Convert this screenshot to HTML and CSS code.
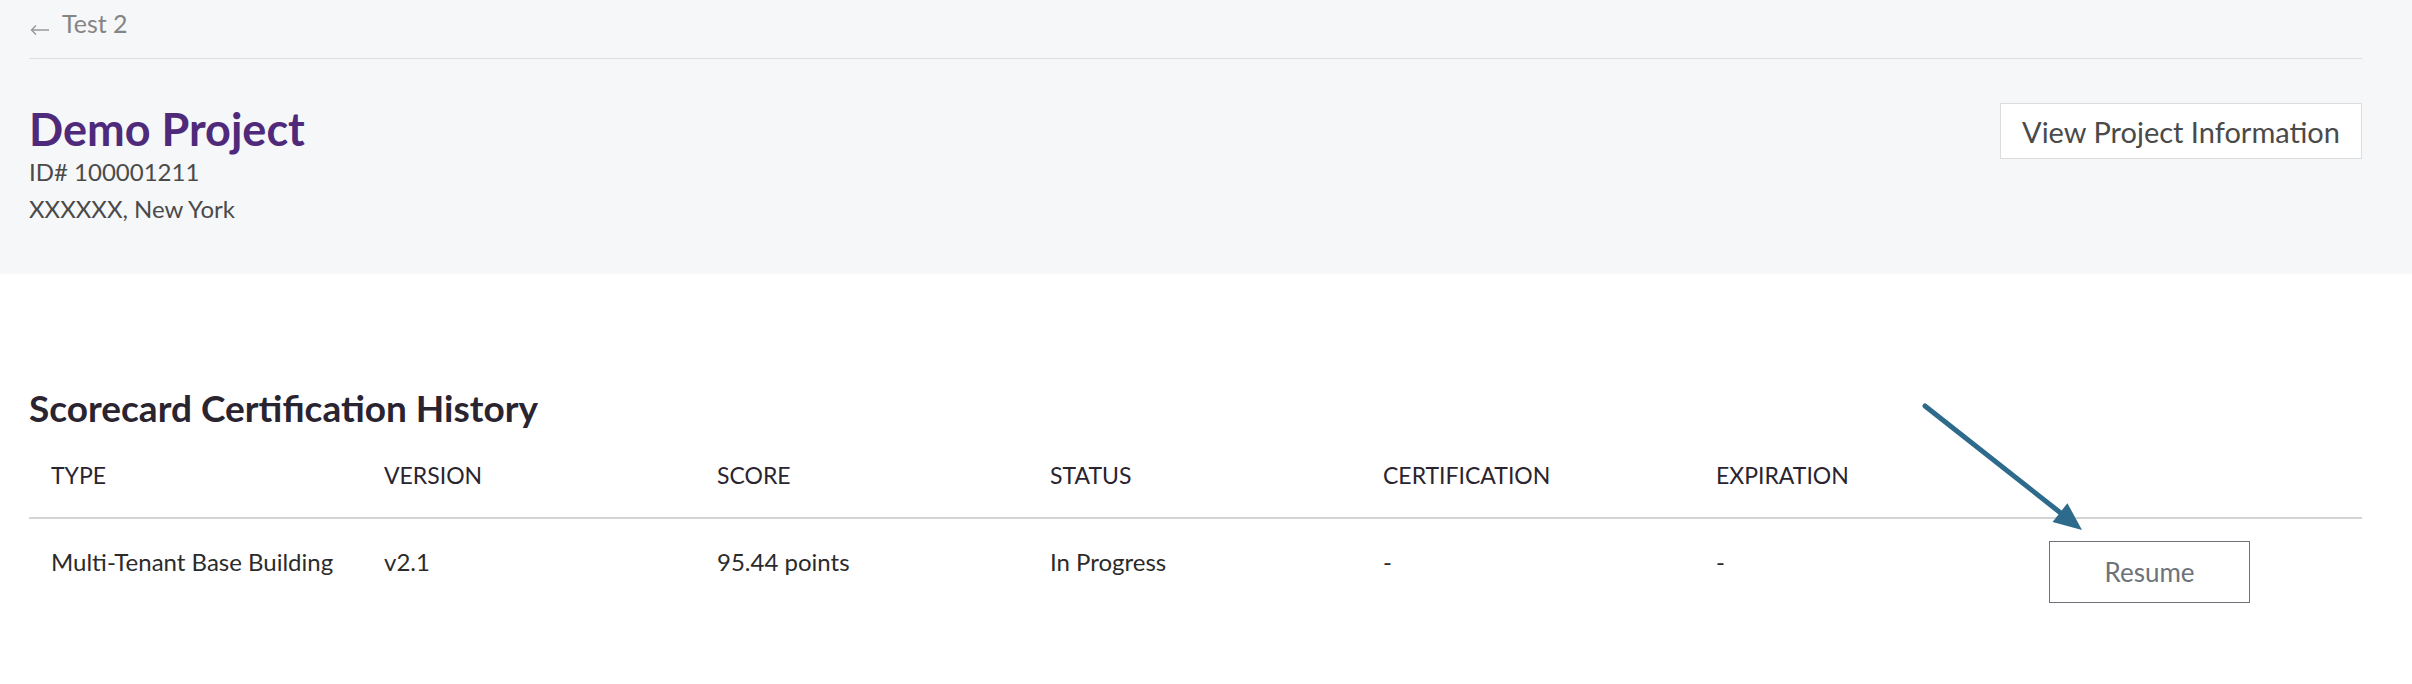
FILE: index.html
```html
<!DOCTYPE html>
<html lang="en">
<head>
    <meta charset="UTF-8">
    <meta name="viewport" content="width=device-width, initial-scale=1.0">
    <title>Demo Project</title>
    <link rel="stylesheet" href="styles.css">
</head>
<body>
    <div id="projectHeader">
        <div class="breadcrumb">
            <svg class="back-arrow" width="20" height="12" viewBox="0 0 20 12">
                <path d="M19 6 H2 M6 1.5 L1.5 6 L6 10.5" fill="none" stroke="#9a9a9a" stroke-width="1.4"/>
            </svg>
            <span>Test 2</span>
        </div>
        <div class="project-row">
            <div class="project-info">
                <h1>Demo Project</h1>
                <p>ID# 100001211</p>
                <p>XXXXXX, New York</p>
            </div>
            <button class="info-button">View Project Information</button>
        </div>
    </div>

    <div id="historySection">
        <h2>Scorecard Certification History</h2>
        <table class="history-table">
            <colgroup>
                <col class="data-col">
                <col class="data-col">
                <col class="data-col">
                <col class="data-col">
                <col class="data-col">
                <col class="data-col">
                <col>
            </colgroup>
            <thead>
                <tr>
                    <th>TYPE</th>
                    <th>VERSION</th>
                    <th>SCORE</th>
                    <th>STATUS</th>
                    <th>CERTIFICATION</th>
                    <th>EXPIRATION</th>
                    <th></th>
                </tr>
            </thead>
            <tbody>
                <tr>
                    <td>Multi-Tenant Base Building</td>
                    <td>v2.1</td>
                    <td>95.44 points</td>
                    <td>In Progress</td>
                    <td>-</td>
                    <td>-</td>
                    <td class="action-cell"><button class="resume-button">Resume</button></td>
                </tr>
            </tbody>
        </table>

        <!-- annotation arrow pointing at the Resume button -->
        <svg class="pointer-arrow" width="200" height="160" viewBox="0 0 200 160">
            <line x1="25" y1="16" x2="162" y2="124" stroke="#2d6a8b" stroke-width="5" stroke-linecap="round"/>
            <polygon points="182,140 152.6,132 167.4,113.2" fill="#2d6a8b"/>
        </svg>
    </div>
</body>
</html>
```

FILE: styles.css
```css
body {
    margin: 0;
    padding: 0;
    background: #fff;
    color: #2b2b2b;
    font-family: Lato, "Open Sans", sans-serif;
}

#projectHeader {
    background: #f6f7f9;
    height: 274px;
    padding: 0 50px 0 29px;
    box-sizing: border-box;
}

.breadcrumb {
    height: 59px;
    box-sizing: border-box;
    padding-top: 6px;
    border-bottom: 1px solid #dddee1;
    display: flex;
    align-items: flex-start;
    gap: 12px;
    font-size: 25px;
    line-height: 34px;
    color: #858585;
}

.back-arrow {
    margin-top: 18px;
    margin-left: 1px;
}

.project-row {
    display: flex;
    justify-content: space-between;
    align-items: flex-start;
}

.project-info h1 {
    margin: 43px 0 0 0;
    font-size: 45px;
    line-height: 54px;
    font-weight: 700;
    color: #4f2a7b;
}

.project-info p {
    margin: 0;
    font-size: 24px;
    line-height: 37px;
    color: #4a4a4a;
}

.project-info h1 + p {
    margin-top: -3px;
}

.info-button {
    margin-top: 44px;
    width: 362px;
    height: 56px;
    background: #fff;
    border: 1px solid #dcdcdc;
    border-radius: 0;
    font-family: Lato, sans-serif;
    font-size: 29px;
    color: #4a4a4a;
    padding: 0;
    cursor: pointer;
}

#historySection {
    position: relative;
    padding: 110px 50px 60px 29px;
}

#historySection h2 {
    margin: 0;
    font-size: 37px;
    line-height: 48px;
    font-weight: 700;
    color: #2a2330;
}

.history-table {
    width: 100%;
    margin-top: 12px;
    border-collapse: collapse;
    table-layout: fixed;
}

.data-col {
    width: 333px;
}

.history-table th {
    text-align: left;
    font-weight: 400;
    font-size: 23px;
    line-height: 28px;
    color: #2a2330;
    padding: 17px 22px 28px;
    border-bottom: 2px solid #d4d4d6;
}

.history-table td {
    vertical-align: top;
    font-size: 24px;
    line-height: 28px;
    color: #2b2b2b;
    padding: 29px 22px 20px;
}

.history-table td.action-cell {
    padding-top: 22px;
}

.resume-button {
    width: 201px;
    height: 62px;
    background: #fff;
    border: 1px solid #6e7379;
    border-radius: 0;
    font-family: Lato, sans-serif;
    font-size: 26px;
    color: #6e7379;
    cursor: pointer;
}

.pointer-arrow {
    position: absolute;
    left: 1900px;
    top: 116px;
}
```
